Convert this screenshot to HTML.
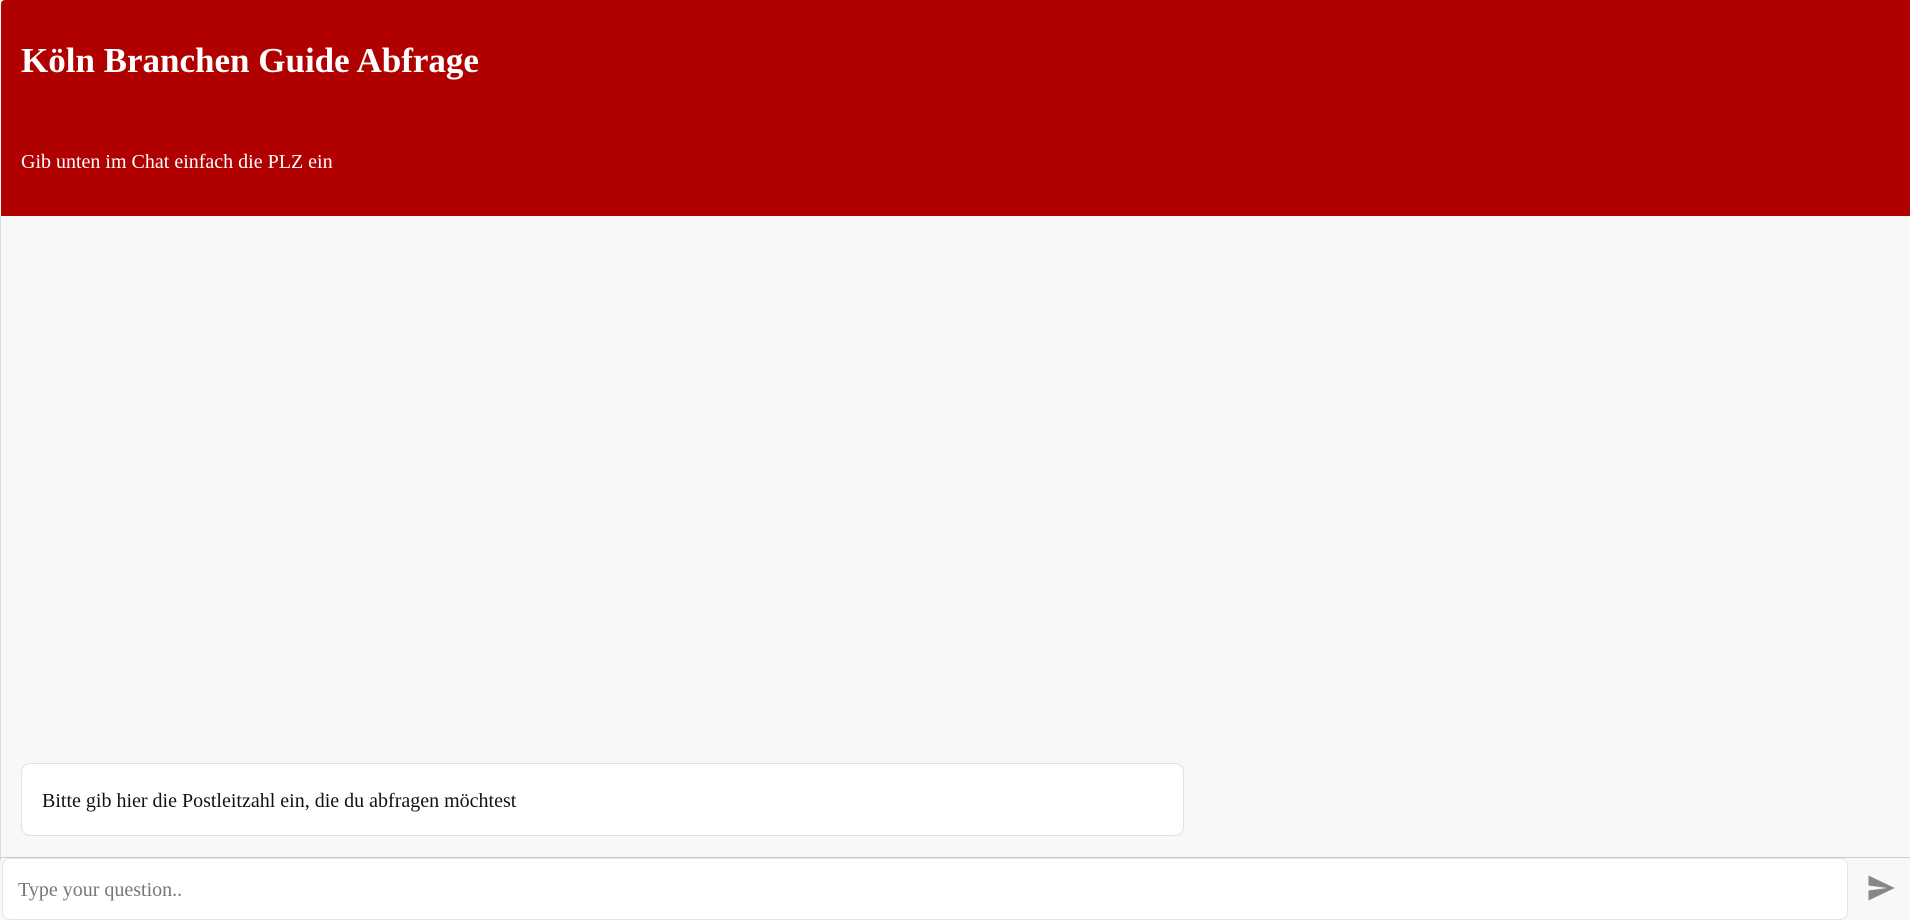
<!DOCTYPE html>
<html><head><meta charset="utf-8"><style>
html,body{margin:0;padding:0;width:1910px;height:917px;overflow:hidden;background:#f8f8f8;font-family:"Liberation Serif",serif;}
.hdr{position:absolute;left:1px;top:0;width:1909px;height:216px;background:#b00000;border-top-left-radius:4px;color:#fff;}
.hdr h1{position:absolute;left:20px;top:41px;margin:0;font-size:35px;line-height:40px;font-weight:bold;white-space:nowrap;}
.hdr p{position:absolute;left:20px;top:151px;margin:0;font-size:20px;line-height:23px;white-space:nowrap;}
.lb{position:absolute;left:0;top:216px;width:1px;height:645px;background:#ddd;}
.msg{position:absolute;left:21px;top:763px;width:1163px;height:73px;background:#fff;border:1px solid #e2e2e2;border-radius:9px;box-sizing:border-box;}
.msg span{position:absolute;left:20px;top:26px;font-size:20px;line-height:23px;color:#111;white-space:nowrap;}
.div{position:absolute;left:0;top:857px;width:1910px;height:1px;background:#ccc;}
.inp{position:absolute;left:2px;top:858px;width:1846px;height:62px;background:#fff;border:1px solid #e4e4e4;border-radius:8px;box-sizing:border-box;}
.inp span{position:absolute;left:15px;top:20px;font-size:20px;line-height:23px;color:#777;white-space:nowrap;}
svg{position:absolute;left:1866px;top:874px;}
</style></head><body>
<div class="hdr"><h1>Köln Branchen Guide Abfrage</h1><p>Gib unten im Chat einfach die PLZ ein</p></div>
<div class="lb"></div>
<div class="msg"><span>Bitte gib hier die Postleitzahl ein, die du abfragen möchtest</span></div>
<div class="div"></div>
<div class="inp"><span>Type your question..</span></div>
<svg width="30" height="28" viewBox="0 0 24 22"><path d="M2 21 L23 11 L2 1 L2 9 L17 11 L2 13 Z" fill="#888"/></svg>
</body></html>
